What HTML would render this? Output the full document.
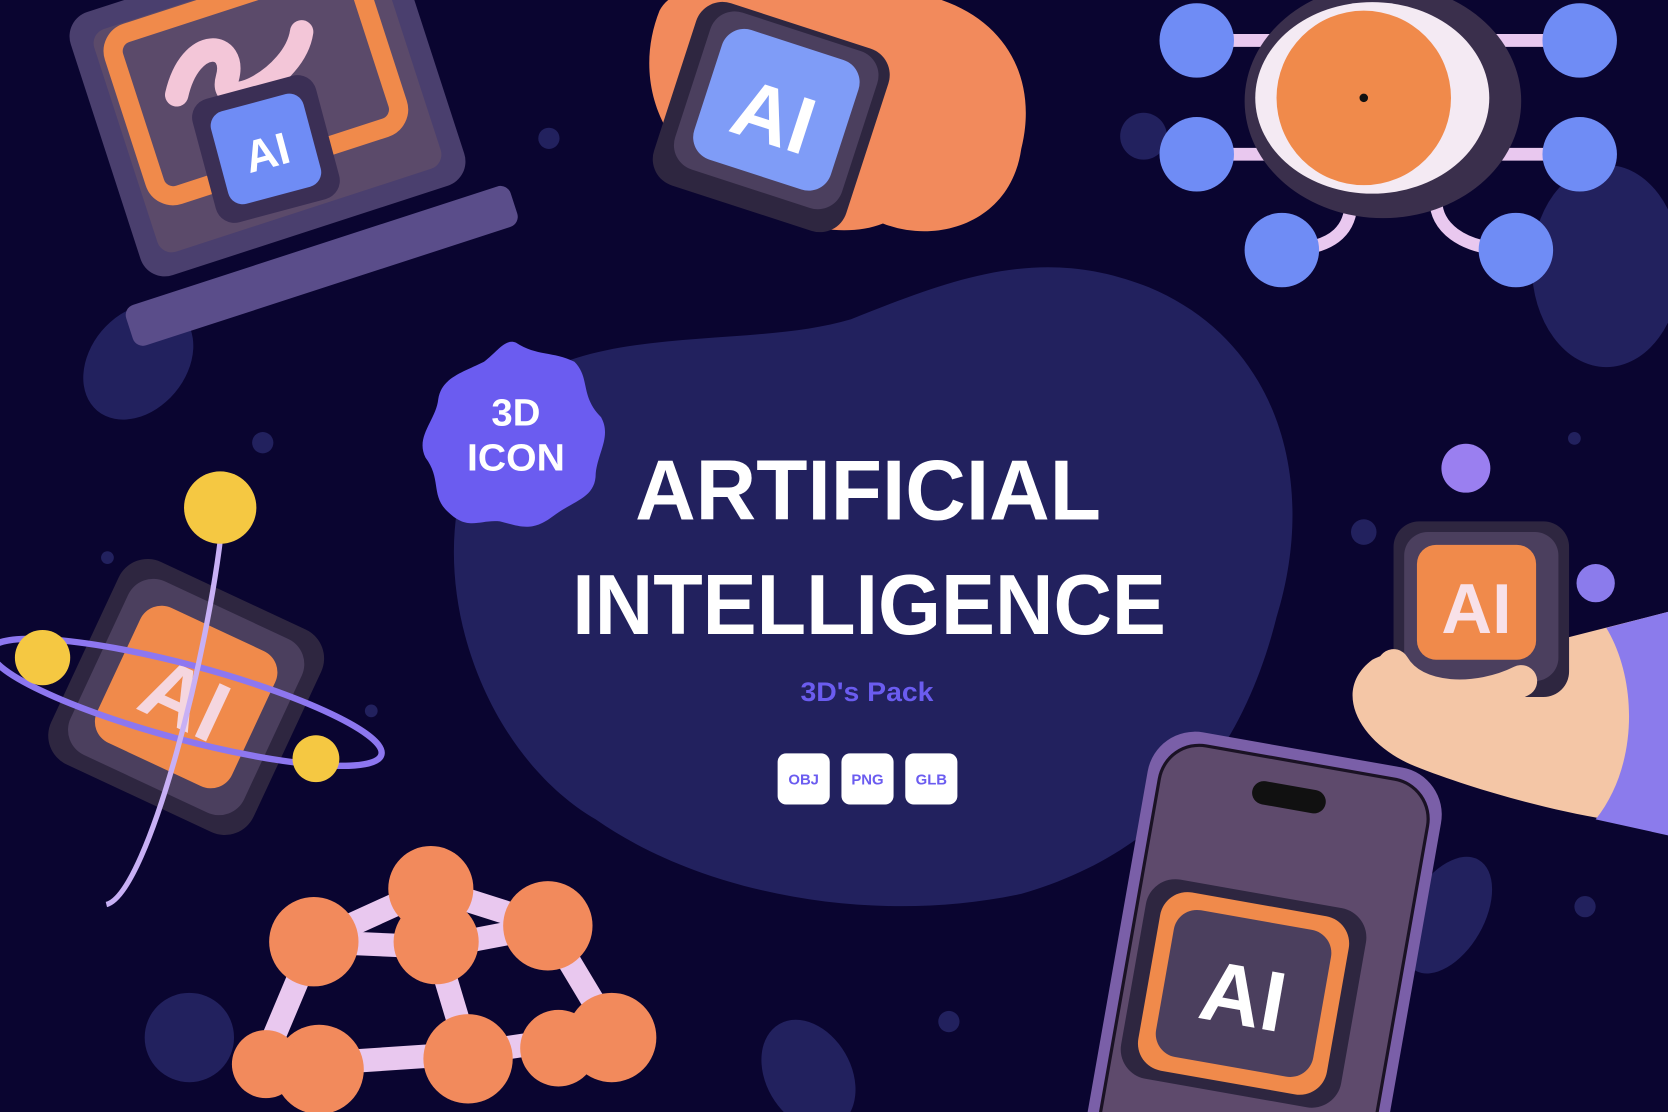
<!DOCTYPE html>
<html><head><meta charset="utf-8"><style>
html,body{margin:0;padding:0;background:#0a0530;overflow:hidden;width:1668px;height:1112px}
svg{display:block;position:absolute;left:0;top:0}
text{font-family:"Liberation Sans",sans-serif;font-weight:bold}
</style></head><body>
<svg width="1668" height="1112" viewBox="0 0 1568 1045" preserveAspectRatio="none" xmlns="http://www.w3.org/2000/svg">
<rect width="1568" height="1045" fill="#0a0530"/>
<path d="M470 380 C540 300 700 330 800 300 C900 260 980 230 1080 270 C1200 320 1240 450 1200 580 C1170 700 1100 800 960 840 C820 870 660 840 560 770 C440 700 380 500 470 380 Z" fill="#22215e"/>
<ellipse cx="130" cy="340" rx="45" ry="60" transform="rotate(40 130 340)" fill="#22215e"/>
<ellipse cx="1510" cy="250" rx="70" ry="95" fill="#22215e"/>
<circle cx="178" cy="975" r="42" fill="#22215e"/>
<ellipse cx="760" cy="1010" rx="40" ry="55" transform="rotate(-30 760 1010)" fill="#22215e"/>
<ellipse cx="1360" cy="860" rx="35" ry="60" transform="rotate(30 1360 860)" fill="#22215e"/>
<circle cx="1075" cy="128" r="22" fill="#22215e"/>
<circle cx="516" cy="130" r="10" fill="#22215e"/>
<circle cx="247" cy="416" r="10" fill="#22215e"/>
<circle cx="1282" cy="500" r="12" fill="#22215e"/>
<circle cx="1490" cy="852" r="10" fill="#22215e"/>
<circle cx="892" cy="960" r="10" fill="#22215e"/>
<circle cx="349" cy="668" r="6" fill="#22215e"/>
<circle cx="101" cy="524" r="6" fill="#22215e"/>
<circle cx="1480" cy="412" r="6" fill="#22215e"/>

<g transform="rotate(-18 270 150)">
<rect x="110" y="-40" width="320" height="260" rx="24" fill="#4a3f6e"/>
<rect x="130" y="-20" width="280" height="220" rx="14" fill="#5b4a6a"/>
<rect x="145" y="-10" width="240" height="160" rx="18" fill="none" stroke="#f08a4b" stroke-width="18"/>
<path d="M190 60 C220 10 260 30 240 60 C220 90 300 80 320 40" fill="none" stroke="#f3c6d8" stroke-width="22" stroke-linecap="round"/>
<rect x="80" y="235" width="380" height="40" rx="10" fill="#5a4d8a"/>
</g>
<g transform="rotate(-15 250 140)">
<rect x="190" y="80" width="120" height="120" rx="18" fill="#3b2f55"/>
<rect x="205" y="95" width="90" height="90" rx="14" fill="#6f8cf5"/>
<text x="250" y="158" font-size="42" fill="#fff" text-anchor="middle">AI</text>
</g>

<path d="M620 10 C640 -30 760 -20 820 -10 C930 -10 980 60 960 140 C950 210 880 230 830 210 C780 230 700 200 660 160 C610 120 600 60 620 10 Z" fill="#f28a5c"/>
<g transform="rotate(18 725 110)">
<rect x="630" y="20" width="190" height="180" rx="26" fill="#2e2640"/>
<rect x="645" y="25" width="165" height="155" rx="24" fill="#4b3f5e"/>
<rect x="660" y="38" width="135" height="128" rx="22" fill="#7f9cf7"/>
<text x="727" y="135" font-size="76" fill="#fff" text-anchor="middle">AI</text>
</g>

<g stroke="#e9c8ef" stroke-width="12" fill="none">
<path d="M1125 38 H1210"/><path d="M1125 145 H1200"/><path d="M1205 235 C1260 235 1270 210 1270 190"/>
<path d="M1485 38 H1400"/><path d="M1485 145 H1410"/><path d="M1425 235 C1370 235 1350 210 1350 190"/>
</g>
<ellipse cx="1300" cy="95" rx="130" ry="110" fill="#3a2f4c"/>
<ellipse cx="1290" cy="92" rx="110" ry="90" fill="#f4eaf3"/>
<circle cx="1282" cy="92" r="82" fill="#f08a4b"/>
<circle cx="1282" cy="92" r="4" fill="#111"/>
<g fill="#6f8cf5">
<circle cx="1125" cy="38" r="35"/><circle cx="1125" cy="145" r="35"/><circle cx="1205" cy="235" r="35"/>
<circle cx="1485" cy="38" r="35"/><circle cx="1485" cy="145" r="35"/><circle cx="1425" cy="235" r="35"/>
</g>

<g transform="rotate(25 175 655)">
<rect x="70" y="550" width="210" height="210" rx="30" fill="#2e2640"/>
<rect x="85" y="565" width="180" height="180" rx="26" fill="#4b3f5e"/>
<rect x="105" y="585" width="140" height="140" rx="22" fill="#f08a4b"/>
<text x="175" y="685" font-size="80" fill="#f5d6df" text-anchor="middle">AI</text>
</g>
<ellipse cx="175" cy="660" rx="190" ry="35" transform="rotate(15 175 660)" fill="none" stroke="#8d77f0" stroke-width="6"/>
<path d="M210 480 C200 600 140 840 100 850" fill="none" stroke="#c8b0f5" stroke-width="5"/>
<circle cx="207" cy="477" r="34" fill="#f5c842"/>
<circle cx="40" cy="618" r="26" fill="#f5c842"/>
<circle cx="297" cy="713" r="22" fill="#f5c842"/>

<g stroke="#e9c8ef" stroke-width="22" fill="none" stroke-linecap="round">
<path d="M295 885 L405 835 L515 870 L575 970 L440 990 L290 1000 L255 980 Z"/>
<path d="M405 835 L410 890 L440 990"/><path d="M410 890 L515 870"/><path d="M410 890 L295 885"/>
</g>
<g fill="#f28a5c">
<circle cx="405" cy="835" r="40"/><circle cx="295" cy="885" r="42"/><circle cx="410" cy="885" r="40"/>
<circle cx="515" cy="870" r="42"/><circle cx="575" cy="975" r="42"/><circle cx="440" cy="995" r="42"/>
<circle cx="300" cy="1005" r="42"/><circle cx="250" cy="1000" r="32"/><circle cx="525" cy="985" r="36"/>
</g>

<g transform="rotate(10 1180 900)">
<rect x="1050" y="700" width="280" height="500" rx="45" fill="#7a5fa8"/>
<rect x="1062" y="712" width="256" height="480" rx="38" fill="#5e4a6c" stroke="#1a1224" stroke-width="3"/>
<rect x="1150" y="735" width="70" height="22" rx="11" fill="#111"/>
<rect x="1070" y="840" width="210" height="190" rx="28" fill="#2e2640"/>
<rect x="1085" y="850" width="180" height="170" rx="26" fill="#f08a4b"/>
<rect x="1100" y="865" width="150" height="140" rx="22" fill="#4b3f5e"/>
<text x="1175" y="965" font-size="80" fill="#fff" text-anchor="middle">AI</text>
</g>

<path d="M1568 575 L1470 600 C1420 600 1330 600 1290 620 C1250 650 1280 700 1330 720 C1380 740 1450 760 1510 770 L1568 780 Z" fill="#f4c6a6"/>
<path d="M1510 590 L1568 575 L1568 785 L1500 770 C1540 720 1540 640 1510 590 Z" fill="#8b7bec"/>
<circle cx="1378" cy="440" r="23" fill="#9a7ff0"/>
<circle cx="1500" cy="548" r="18" fill="#8b7bec"/>
<rect x="1310" y="490" width="165" height="165" rx="24" fill="#2e2640"/>
<rect x="1320" y="500" width="145" height="140" rx="22" fill="#4b3f5e"/>
<rect x="1332" y="512" width="112" height="108" rx="18" fill="#f08a4b"/>
<text x="1388" y="595" font-size="66" fill="#f8e1e8" text-anchor="middle">AI</text>
<path d="M1310 625 C1330 660 1390 660 1430 640" fill="none" stroke="#f4c6a6" stroke-width="30" stroke-linecap="round"/>

<path d="M485 322 C505 335 520 330 540 340 C555 355 545 372 565 392 C575 410 562 425 560 445 C560 468 540 470 520 485 C500 500 490 495 470 490 C450 488 440 500 420 480 C405 465 415 450 400 430 C390 410 410 395 412 375 C415 355 435 350 455 340 C468 330 475 318 485 322 Z" fill="#6b5cf0"/>
<text x="485" y="400" font-size="36" fill="#fff" text-anchor="middle">3D</text>
<text x="485" y="442" font-size="36" fill="#fff" text-anchor="middle" textLength="92" lengthAdjust="spacingAndGlyphs">ICON</text>

<text x="597" y="488" font-size="80" fill="#fff" textLength="438" lengthAdjust="spacingAndGlyphs">ARTIFICIAL</text>
<text x="538" y="596" font-size="80" fill="#fff" textLength="558" lengthAdjust="spacingAndGlyphs">INTELLIGENCE</text>
<text x="815" y="659" font-size="25" fill="#6b5cf0" text-anchor="middle" textLength="125" lengthAdjust="spacingAndGlyphs">3D's Pack</text>

<g font-size="14" fill="#6b5cf0" text-anchor="middle">
<rect x="731" y="708" width="49" height="48" rx="8" fill="#fff"/>
<rect x="791" y="708" width="49" height="48" rx="8" fill="#fff"/>
<rect x="851" y="708" width="49" height="48" rx="8" fill="#fff"/>
<text x="755.5" y="737">OBJ</text>
<text x="815.5" y="737">PNG</text>
<text x="875.5" y="737">GLB</text>
</g>
</svg>
</body></html>
